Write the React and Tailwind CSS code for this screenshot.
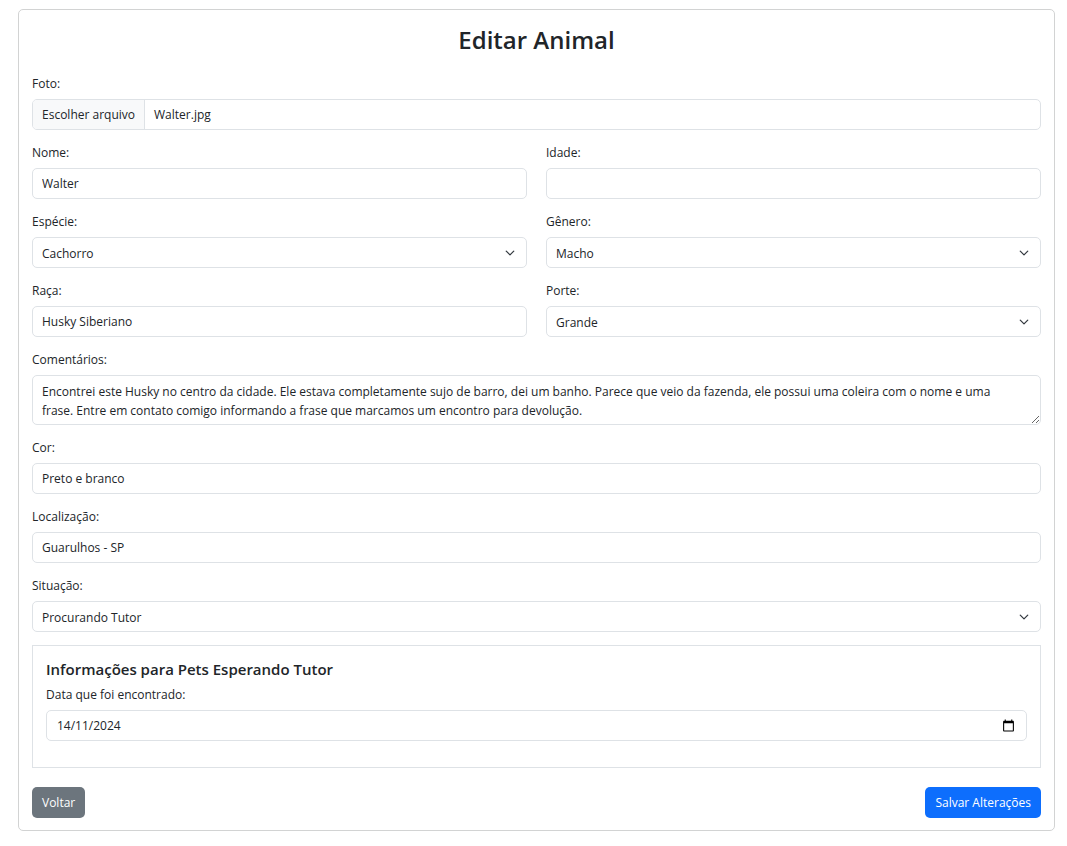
import { useState } from "react";

const control =
  "block h-[31px] w-full min-w-0 rounded-[5px] border border-[#dee2e6] bg-white px-[9px] text-[#212529] outline-none focus:border-[#86b7fe]";

function Label({ htmlFor, children }) {
  return (
    <label htmlFor={htmlFor} className="mb-[6px] block w-fit leading-[19px]">
      {children}
    </label>
  );
}

function TextField({ id, label, value }) {
  return (
    <div>
      <Label htmlFor={id}>{label}</Label>
      <input id={id} type="text" defaultValue={value} className={control} />
    </div>
  );
}

function SelectField({ id, label, options }) {
  return (
    <div>
      <Label htmlFor={id}>{label}</Label>
      <div className="grid items-center">
        <select id={id} className={`${control} col-start-1 row-start-1 appearance-none pt-[2px] pr-8`}>
          {options.map((option) => (
            <option key={option}>{option}</option>
          ))}
        </select>
        <svg
          viewBox="0 0 16 16"
          aria-hidden="true"
          className="pointer-events-none col-start-1 row-start-1 mr-[12px] size-[10px] justify-self-end"
        >
          <path
            d="m2 5 6 6 6-6"
            fill="none"
            stroke="#343a40"
            strokeWidth="2"
            strokeLinecap="round"
            strokeLinejoin="round"
          />
        </svg>
      </div>
    </div>
  );
}

function PhotoField() {
  const [fileName, setFileName] = useState("Walter.jpg");
  return (
    <div>
      <Label htmlFor="foto">Foto:</Label>
      <input
        id="foto"
        type="file"
        accept="image/*"
        className="sr-only"
        onChange={(event) => setFileName(event.target.files[0]?.name ?? "")}
      />
      <label
        htmlFor="foto"
        className="flex h-[31px] items-stretch overflow-hidden rounded-[5px] border border-[#dee2e6] leading-[29px]"
      >
        <span className="border-r border-[#dee2e6] bg-[#f8f9fa] px-[9px]">Escolher arquivo</span>
        <span className="px-[9px]">{fileName}</span>
      </label>
    </div>
  );
}

function DateField() {
  return (
    <div>
      <Label htmlFor="data">Data que foi encontrado:</Label>
      <div className="flex h-[31px] items-center rounded-[5px] border border-[#dee2e6] px-[10px]">
        <input
          id="data"
          type="text"
          inputMode="numeric"
          defaultValue="14/11/2024"
          className="min-w-0 flex-1 outline-none"
        />
        <button type="button" aria-label="Abrir calendário">
          <svg viewBox="0 0 24 24" className="mr-px size-[13px]" aria-hidden="true">
            <path
              fill="#000"
              d="M20 3h-1V1h-2v2H7V1H5v2H4c-1.100 0-2 .9-2 2v16c0 1.100.9 2 2 2h16c1.100 0 2-.9 2-2V5c0-1.100-.9-2-2-2zm0 18H4V8h16v13z"
            />
          </svg>
        </button>
      </div>
    </div>
  );
}

export default function App() {
  return (
    <main className="pt-[9px] pr-3 pb-4 pl-[18px] font-['Open_Sans','Noto_Sans',sans-serif] text-[12px] text-[#212529]">
      <form
        className="rounded-[5px] border border-[#d2d3d3] bg-white px-[13px] pt-[13px] pb-3"
        onSubmit={(event) => event.preventDefault()}
      >
        <h2 className="mb-[17px] text-center text-[24px] leading-[34px] font-semibold">Editar Animal</h2>

        <div className="flex flex-col gap-[13px]">
          <PhotoField />
          <div className="grid grid-cols-2 gap-x-[19px] gap-y-[13px]">
            <TextField id="nome" label="Nome:" value="Walter" />
            <TextField id="idade" label="Idade:" value="" />
            <SelectField id="especie" label="Espécie:" options={["Cachorro", "Gato"]} />
            <SelectField id="genero" label="Gênero:" options={["Macho", "Fêmea"]} />
            <TextField id="raca" label="Raça:" value="Husky Siberiano" />
            <SelectField id="porte" label="Porte:" options={["Grande", "Médio", "Pequeno"]} />
          </div>
          <div>
            <Label htmlFor="comentarios">Comentários:</Label>
            <textarea
              id="comentarios"
              rows={2}
              className="block w-full resize-y rounded-[5px] border border-[#dee2e6] pt-[6px] pr-6 pb-[4px] pl-[9px] leading-[19px] outline-none"
              defaultValue="Encontrei este Husky no centro da cidade. Ele estava completamente sujo de barro, dei um banho. Parece que veio da fazenda, ele possui uma coleira com o nome e uma frase. Entre em contato comigo informando a frase que marcamos um encontro para devolução."
            />
          </div>
          <TextField id="cor" label="Cor:" value="Preto e branco" />
          <TextField id="localizacao" label="Localização:" value="Guarulhos - SP" />
          <SelectField id="situacao" label="Situação:" options={["Procurando Tutor", "Adotado"]} />

          <section className="border border-[#dee2e6] px-[13px] pt-[14px] pb-[26px]">
            <h5 className="mb-[6px] text-[15px] leading-[19px] font-semibold">
              Informações para Pets Esperando Tutor
            </h5>
            <DateField />
          </section>
        </div>

        <div className="mt-[19px] flex justify-between">
          <button type="button" className="h-[31px] rounded-[5px] bg-[#6c757d] px-[10px] text-white">
            Voltar
          </button>
          <button type="submit" className="h-[31px] rounded-[5px] bg-[#0d6efd] px-[10px] text-white">
            Salvar Alterações
          </button>
        </div>
      </form>
    </main>
  );
}
